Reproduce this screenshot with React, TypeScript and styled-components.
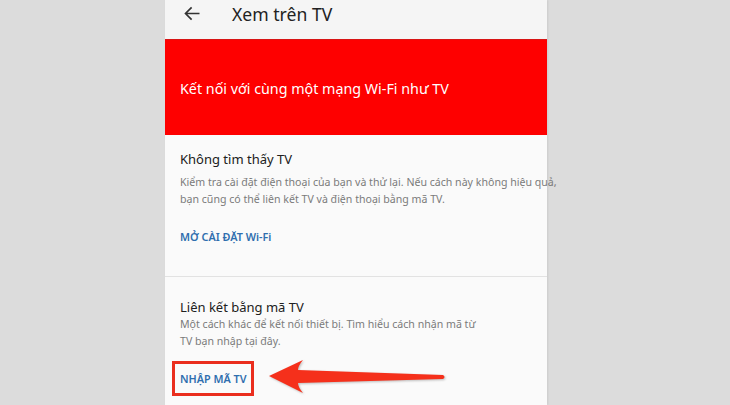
import React from "react";
import styled, { createGlobalStyle } from "styled-components";

const Global = createGlobalStyle`
  html, body {
    margin: 0;
    padding: 0;
    background: #dcdcdc;
    font-family: "Noto Sans", "Open Sans", sans-serif;
  }
`;

const Page = styled.div`
  width: 730px;
  height: 405px;
  overflow: hidden;
  display: flex;
  padding-left: 165px;
  box-sizing: border-box;
  background: #dcdcdc;
`;

const Screen = styled.div`
  position: relative;
  width: 382px;
  background: #fafafa;
  display: flex;
  flex-direction: column;
  box-shadow: 1px 0 2px rgba(0, 0, 0, 0.08);

  & > * {
    flex-shrink: 0;
  }
`;

const AppBar = styled.div`
  height: 39px;
  background: #f5f5f5;
  display: flex;
  align-items: flex-start;
  padding-left: 17px;
  box-sizing: border-box;
`;

const BackIcon = styled.svg`
  width: 21px;
  height: 21px;
  margin-top: 3px;
  color: #333;
`;

const AppTitle = styled.div`
  margin-left: 29px;
  margin-top: 1px;
  font-size: 17.6px;
  line-height: 26px;
  color: #222;
`;

const Banner = styled.div`
  height: 96px;
  background: #fe0000;
  display: flex;
  align-items: center;
  padding-left: 15px;
  box-sizing: border-box;
  border-top: 1px solid #d81515;
`;

const BannerText = styled.div`
  color: #fff;
  font-size: 14.3px;
  margin-top: 2px;
`;

const Section = styled.div<{ $pad: string }>`
  padding: ${(p) => p.$pad};
  display: flex;
  flex-direction: column;
  align-items: flex-start;
`;

const Divider = styled.div`
  height: 1px;
  background: #e2e2e2;
`;

const Heading = styled.div`
  font-size: 13px;
  line-height: 18px;
  color: #202020;
`;

const Body = styled.div<{ $gap?: number }>`
  margin-top: ${(p) => p.$gap ?? 0}px;
  font-size: 10.6px;
  line-height: 17px;
  color: #7a7a7a;
  white-space: nowrap;
`;

const Link = styled.div<{ $gap?: number }>`
  margin-top: ${(p) => p.$gap ?? 0}px;
  font-size: 10.8px;
  line-height: 16px;
  font-weight: 600;
  color: #2f6eae;
  white-space: nowrap;
`;

const BoxedLink = styled.div`
  margin-top: 11px;
  margin-left: -8px;
  border: 3px solid #ea2e1e;
  padding: 0 5px 0 5px;
  height: 35px;
  box-sizing: border-box;
  display: flex;
  align-items: center;
`;

const Arrow = styled.svg`
  position: absolute;
  left: 102px;
  top: 356px;
  width: 182px;
  height: 42px;
  filter: drop-shadow(1px 1px 1px rgba(0, 0, 0, 0.25));
`;

export default function App() {
  return (
    <>
      <Global />
      <Page>
        <Screen>
          <AppBar>
            <BackIcon viewBox="0 0 24 24" fill="none" stroke="currentColor" strokeWidth={1.9}>
              <path d="M20 12H4M11 5l-7 7 7 7" />
            </BackIcon>
            <AppTitle>Xem trên TV</AppTitle>
          </AppBar>
          <Banner>
            <BannerText>Kết nối với cùng một mạng Wi-Fi như TV</BannerText>
          </Banner>
          <Section $pad="15px 15px 31px 15px">
            <Heading>Không tìm thấy TV</Heading>
            <Body $gap={6}>
              Kiểm tra cài đặt điện thoại của bạn và thử lại. Nếu cách này không hiệu quả,
              <br />
              bạn cũng có thể liên kết TV và điện thoại bằng mã TV.
            </Body>
            <Link $gap={21}>MỞ CÀI ĐẶT Wi-Fi</Link>
          </Section>
          <Divider />
          <Section $pad="21px 15px 0 15px">
            <Heading>Liên kết bằng mã TV</Heading>
            <Body>
              Một cách khác để kết nối thiết bị. Tìm hiểu cách nhận mã từ
              <br />
              TV bạn nhập tại đây.
            </Body>
            <BoxedLink>
              <Link>NHẬP MÃ TV</Link>
            </BoxedLink>
          </Section>
          <Arrow viewBox="0 0 182 42">
            <path
              d="M2 20 L36 4 Q31 10 31 14 L176 19 Q179 21 176 23 L31 27 Q31 31 36 37 Z"
              fill="#f5301b"
            />
          </Arrow>
        </Screen>
      </Page>
    </>
  );
}
